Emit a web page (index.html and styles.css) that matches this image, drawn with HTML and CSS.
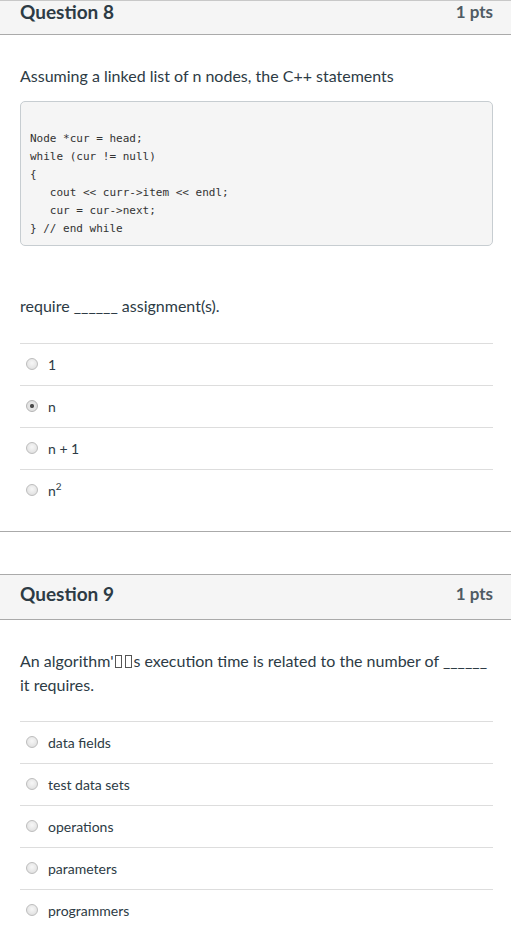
FILE: index.html
```html
<!DOCTYPE html>
<html lang="en">
<head>
<meta charset="utf-8">
<title>Quiz</title>
<link rel="stylesheet" href="styles.css">
</head>
<body>
<div class="quiz">
  <section class="question">
    <header class="q-header q-header--cropped">
      <span class="q-title">Question 8</span>
      <span class="q-points">1 pts</span>
    </header>
    <div class="q-body">
      <p class="q-text">Assuming a linked list of n nodes, the C++ statements</p>
      <pre class="code">Node *cur = head;
while (cur != null)
{
   cout &lt;&lt; curr-&gt;item &lt;&lt; endl;
   cur = cur-&gt;next;
} // end while</pre>
      <p class="q-text q-text--after">require ______ assignment(s).</p>
      <ul class="answers">
        <li class="answer"><input class="radio" type="radio" name="q8"><span class="answer-label">1</span></li>
        <li class="answer"><input class="radio" type="radio" name="q8" checked><span class="answer-label">n</span></li>
        <li class="answer"><input class="radio" type="radio" name="q8"><span class="answer-label">n + 1</span></li>
        <li class="answer"><input class="radio" type="radio" name="q8"><span class="answer-label">n<sup class="sup">2</sup></span></li>
      </ul>
    </div>
  </section>

  <section class="question question--next">
    <header class="q-header">
      <span class="q-title">Question 9</span>
      <span class="q-points">1 pts</span>
    </header>
    <div class="q-body">
      <p class="q-text">An algorithm'<span class="tofu"></span><span class="tofu"></span>s execution time is related to the number of ______ it requires.</p>
      <ul class="answers answers--tight">
        <li class="answer"><input class="radio" type="radio" name="q9"><span class="answer-label">data fields</span></li>
        <li class="answer"><input class="radio" type="radio" name="q9"><span class="answer-label">test data sets</span></li>
        <li class="answer"><input class="radio" type="radio" name="q9"><span class="answer-label">operations</span></li>
        <li class="answer"><input class="radio" type="radio" name="q9"><span class="answer-label">parameters</span></li>
        <li class="answer"><input class="radio" type="radio" name="q9"><span class="answer-label">programmers</span></li>
      </ul>
    </div>
  </section>
</div>
</body>
</html>
```

FILE: styles.css
```css
html, body {
  margin: 0;
  padding: 0;
  background: #ffffff;
}

body {
  font-family: Lato, "Open Sans", "Liberation Sans", sans-serif;
  color: #2d3b45;
}

.quiz {
  display: flex;
  flex-direction: column;
}

.question {
  border-bottom: 1px solid #aaaaaa;
  padding-bottom: 20px;
}

.question--next {
  margin-top: 42px;
}

.q-header {
  display: flex;
  justify-content: space-between;
  align-items: flex-start;
  height: 36px;
  padding: 8px 18px 0 20px;
  box-sizing: content-box;
  background: #f5f5f5;
  border-top: 1px solid #aaaaaa;
  border-bottom: 1px solid #aaaaaa;
}

.q-header--cropped {
  height: 33px;
  padding-top: 0;
  border-top-color: #c8c8c8;
}

.q-title,
.q-points {
  line-height: 22px;
}

.q-title {
  font-size: 19px;
  font-weight: 700;
  color: #2d3b45;
}

.q-points {
  font-size: 17px;
  font-weight: 700;
  color: #4f5b64;
}

.q-body {
  padding: 29px 18px 0 20px;
}

.q-text {
  margin: 0;
  font-size: 16px;
  line-height: 24px;
}

.q-text--after {
  margin-top: 48px;
}

.code {
  margin: 13px 0 0 0;
  padding: 28px 10px 7px 9px;
  background: #f5f5f5;
  border: 1px solid #c7cdd1;
  border-radius: 5px;
  font-family: "DejaVu Sans Mono", "Liberation Mono", monospace;
  font-size: 11px;
  line-height: 18px;
  color: #333333;
  white-space: pre;
}

.answers {
  list-style: none;
  margin: 25px 0 0 0;
  padding: 0;
}

.answers--tight {
  margin-top: 24px;
}

.answer {
  display: flex;
  align-items: center;
  height: 42px;
  box-sizing: border-box;
  border-top: 1px solid #dddddd;
}

.radio {
  appearance: none;
  -webkit-appearance: none;
  width: 12px;
  height: 12px;
  margin: 0 10px 2px 6px;
  border-radius: 50%;
  border: 1px solid #bdbdbd;
  box-sizing: border-box;
  background: radial-gradient(circle at 50% 40%, #f7f7f7 0%, #e6e6e6 60%, #d9d9d9 100%);
  flex: none;
}

.radio:checked {
  border-color: #b5b5b5;
  background: radial-gradient(circle, #444444 0, #555555 1.8px, #e6e6e6 2.4px, #dcdcdc 100%);
}

.answer-label {
  font-size: 14px;
  line-height: 20px;
  color: #2d3b45;
}

.sup {
  font-size: 10px;
  line-height: 0;
  vertical-align: 6px;
}

.tofu {
  display: inline-block;
  width: 5px;
  height: 11px;
  border: 1px solid #555555;
  margin: 0 1px 0 2px;
  vertical-align: -1px;
}
```
